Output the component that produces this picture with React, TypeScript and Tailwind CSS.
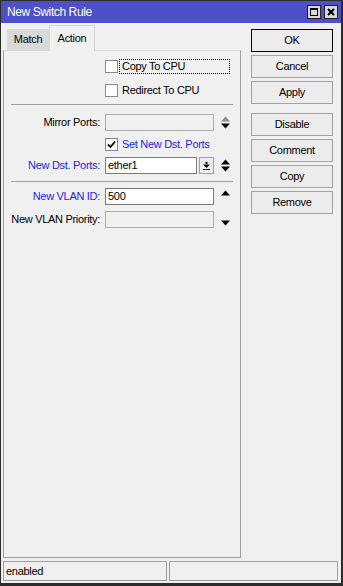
import type { ReactNode } from "react";

const font = "font-['Liberation_Sans',Arial,sans-serif] text-[11px] tracking-[-0.3px]";
const blue = "text-[#2424e8]";

function UpDown({ upGrey = false, up = true, down = true }: { upGrey?: boolean; up?: boolean; down?: boolean }) {
  return (
    <svg width="9" height="13" viewBox="0 0 9 13" className="block">
      {up && <polygon points="0,5.5 4.5,0.5 9,5.5" fill={upGrey ? "#8c8c8c" : "#000"} />}
      {down && <polygon points="0,7.5 9,7.5 4.5,12.5" fill="#000" />}
    </svg>
  );
}

function Check({ checked = false }: { checked?: boolean }) {
  return (
    <div className="w-[13px] h-[13px] border border-[#8a8a8a] bg-white flex items-center justify-center shrink-0">
      {checked && (
        <svg width="9" height="9" viewBox="0 0 9 9">
          <polyline points="1,4.5 3.5,7 8,1.5" fill="none" stroke="#000" strokeWidth="1.8" />
        </svg>
      )}
    </div>
  );
}

function CheckRow({ label, checked, focused, labelClass = "" }: { label: string; checked?: boolean; focused?: boolean; labelClass?: string }) {
  return (
    <div className="flex items-center h-[15px]">
      <div className="w-[101px] shrink-0" />
      <Check checked={checked} />
      <div
        className={`ml-[1px] w-[111px] h-[15px] pl-[2px] flex items-center border border-dotted ${
          focused ? "border-black" : "border-transparent"
        } ${labelClass}`}
      >
        {label}
      </div>
    </div>
  );
}

function FieldRow({ label, labelClass = "", children, icon }: { label: string; labelClass?: string; children: ReactNode; icon?: ReactNode }) {
  return (
    <div className="flex items-center h-[17px]">
      <div className={`w-[96px] shrink-0 text-right whitespace-nowrap ${labelClass}`}>{label}</div>
      <div className="ml-[5px] w-[109px] h-[17px] flex">{children}</div>
      <div className="ml-[7px] w-[9px] flex items-center justify-center">{icon}</div>
    </div>
  );
}

function Btn({ children, primary = false }: { children: ReactNode; primary?: boolean }) {
  return (
    <div
      className={`w-[82px] h-[23px] flex items-center justify-center bg-[#ececec] border ${
        primary ? "border-black" : "border-[#a3a3a3]"
      } text-black`}
    >
      {children}
    </div>
  );
}

export default function App() {
  return (
    <div className={`w-[343px] h-[586px] bg-[#f0f0f0] border-l border-t border-r-[2px] border-b-[3px] border-[#2b2b2b] flex flex-col text-black ${font}`}>
      {/* title bar */}
      <div className="h-[22px] bg-[#4d50c9] flex items-center justify-between pl-[6px] pr-[3px] shrink-0">
        <span className="text-white text-[12px] tracking-[-0.4px]">New Switch Rule</span>
        <div className="flex gap-[3px]">
          <div className="w-[14px] h-[14px] bg-[#d8d8d8] border border-[#202020] flex items-center justify-center">
            <div className="w-[8px] h-[8px] border border-black border-t-2" />
          </div>
          <div className="w-[14px] h-[14px] bg-[#d8d8d8] border border-[#202020] flex items-center justify-center">
            <svg width="8" height="8" viewBox="0 0 8 8">
              <path d="M1 1 L7 7 M7 1 L1 7" stroke="#000" strokeWidth="2" />
            </svg>
          </div>
        </div>
      </div>

      <div className="flex flex-1 min-h-0">
        {/* left column */}
        <div className="w-[240px] pl-[2px] pt-[2px] flex flex-col shrink-0">
          <div className="h-[25px] flex items-end pl-[4px] shrink-0">
            <div className="w-[42px] h-[21px] bg-[#d9d9d9] flex items-center justify-center">Match</div>
            <div className="relative z-10 w-[46px] h-[26px] -mb-[1px] bg-[#f0f0f0] border border-b-0 border-[#d6d6d6] flex items-center justify-center pb-[1px]">
              Action
            </div>
          </div>
          <div className="flex-1 border border-[#a0a0a0] border-t-[#d9d9d9] flex flex-col">
            <div className="mt-[8px]">
              <CheckRow label="Copy To CPU" focused />
            </div>
            <div className="mt-[9px]">
              <CheckRow label="Redirect To CPU" />
            </div>
            <div className="mt-[6px] mx-[7px] border-t border-[#a0a0a0]" />
            <div className="mt-[9px]">
              <FieldRow label="Mirror Ports:" icon={<UpDown upGrey />}>
                <div className="flex-1 border border-[#ababab] bg-[#f0f0f0]" />
              </FieldRow>
            </div>
            <div className="mt-[6px]">
              <CheckRow label="Set New Dst. Ports" checked labelClass={blue} />
            </div>
            <div className="mt-[5px]">
              <FieldRow label="New Dst. Ports:" labelClass={blue} icon={<UpDown />}>
                <div className="w-[92px] border border-[#7a7a7a] bg-white pl-[2px] flex items-center">ether1</div>
                <div className="ml-[2px] flex-1 border border-[#a0a0a0] bg-[#ececec] flex items-center justify-center">
                  <svg width="7" height="8" viewBox="0 0 7 8">
                    <rect x="2.5" y="0" width="2" height="2" fill="#000" />
                    <polygon points="0,2.5 7,2.5 3.5,6" fill="#000" />
                    <rect x="0" y="7" width="7" height="1" fill="#000" />
                  </svg>
                </div>
              </FieldRow>
            </div>
            <div className="mt-[7px] mx-[7px] border-t border-[#a0a0a0]" />
            <div className="mt-[6px]">
              <FieldRow label="New VLAN ID:" labelClass={blue} icon={<UpDown down={false} />}>
                <div className="flex-1 border border-[#7a7a7a] bg-white pl-[2px] flex items-center">500</div>
              </FieldRow>
            </div>
            <div className="mt-[6px]">
              <FieldRow label="New VLAN Priority:" icon={<UpDown up={false} />}>
                <div className="flex-1 border border-[#ababab] bg-[#f0f0f0]" />
              </FieldRow>
            </div>
          </div>
        </div>

        {/* right column */}
        <div className="pl-[10px] pt-[6px] flex flex-col">
          <div className="flex flex-col gap-[3px]">
            <Btn primary>OK</Btn>
            <Btn>Cancel</Btn>
            <Btn>Apply</Btn>
          </div>
          <div className="mt-[9px] flex flex-col gap-[3px]">
            <Btn>Disable</Btn>
            <Btn>Comment</Btn>
            <Btn>Copy</Btn>
            <Btn>Remove</Btn>
          </div>
        </div>
      </div>

      {/* status bar */}
      <div className="h-[25px] pt-[3px] pl-[2px] flex gap-[2px] shrink-0">
        <div className="w-[164px] h-[20px] border border-[#a0a0a0] flex items-center pl-[2px]">enabled</div>
        <div className="w-[169px] h-[20px] border border-[#a0a0a0]" />
      </div>
    </div>
  );
}
